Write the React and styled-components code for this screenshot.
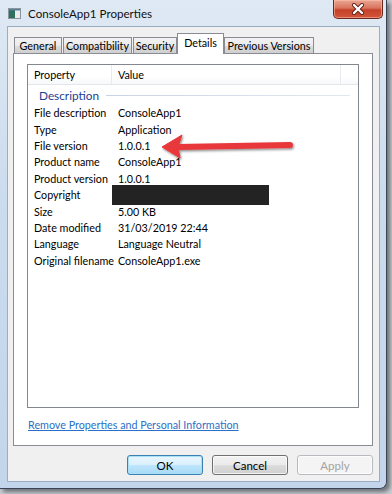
import React from "react";
import styled, { createGlobalStyle } from "styled-components";

const GlobalStyle = createGlobalStyle`
  html, body {
    margin: 0;
    padding: 0;
  }
  body {
    font-family: "Segoe UI", Lato, "Noto Sans", sans-serif;
    font-size: 10.75px;
    color: #000;
  }
`;

const Desktop = styled.div`
  width: 392px;
  height: 494px;
  background: #c9cdd2;
  overflow: hidden;
`;

const Window = styled.div`
  width: 386px;
  height: 488px;
  display: flex;
  flex-direction: column;
  background: linear-gradient(180deg, #dfe9f4 0%, #cbdcee 40%, #c2d5ea 100%);
  border-right: 1px solid #3b4552;
  border-bottom: 1px solid #3b4552;
  border-radius: 0 0 7px 0;
  box-shadow: 3px 3px 4px rgba(30, 36, 44, 0.55);
`;

const TitleBar = styled.div`
  height: 26px;
  display: flex;
  align-items: center;
  padding-left: 8px;
  position: relative;
  flex-shrink: 0;
`;

const Title = styled.span`
  margin-left: 7px;
  font-size: 11.6px;
  color: #111;
`;

const CloseButton = styled.div`
  position: absolute;
  left: 333px;
  top: 0;
  width: 48px;
  height: 18px;
  border: 1px solid #6b2a20;
  border-top: none;
  border-radius: 0 0 5px 5px;
  background: linear-gradient(180deg, #e9a895 0%, #d9735c 45%, #c5412a 55%, #d2553a 100%);
  box-shadow: inset 0 0 0 1px rgba(255, 200, 180, 0.5);
  display: flex;
  align-items: center;
  justify-content: center;
`;

const Client = styled.div`
  flex: 1;
  margin: 0 6px 6px 7px;
  background: #f0f0f0;
  border: 1px solid #9aadc2;
  padding: 6px 6px 0 5px;
  display: flex;
  flex-direction: column;
`;

const TabRow = styled.div`
  display: flex;
  align-items: flex-end;
  height: 21px;
  padding-left: 1px;
  gap: 1px;
  position: relative;
  z-index: 1;
`;

const Tab = styled.div`
  width: ${(p) => p.$w}px;
  height: ${(p) => (p.$active ? 21 : 17)}px;
  box-sizing: border-box;
  border: 1px solid #898c95;
  border-bottom: ${(p) => (p.$active ? "none" : "1px solid #898c95")};
  margin: ${(p) => (p.$active ? "0 -1px" : "0")};
  background: ${(p) =>
    p.$active
      ? "#ffffff"
      : "linear-gradient(180deg, #f2f2f2 0%, #ebebeb 50%, #dddddd 51%, #cfcfcf 100%)"};
  display: flex;
  align-items: ${(p) => (p.$active ? "flex-start" : "center")};
  padding-top: ${(p) => (p.$active ? "2px" : "0")};
  justify-content: center;
  white-space: nowrap;
`;

const Panel = styled.div`
  height: 393px;
  margin-top: -1px;
  background: #fff;
  border: 1px solid #898c95;
  box-sizing: border-box;
  display: flex;
  flex-direction: column;
  padding: 10px 13px 0 13px;
`;

const List = styled.div`
  position: relative;
  height: 344px;
  box-sizing: border-box;
  border: 1px solid #828790;
  background: #fff;
`;

const HeaderRow = styled.div`
  display: grid;
  grid-template-columns: 84px 229px 1fr;
  height: 19px;
  border-bottom: 1px solid #e3e6ea;
  background: linear-gradient(180deg, #ffffff 0%, #ffffff 60%, #f7f8fa 100%);
`;

const HeaderCell = styled.div`
  display: flex;
  align-items: center;
  padding-left: 6px;
  border-right: 1px solid ${(p) => (p.$last ? "transparent" : "#e7eaee")};
`;

const Group = styled.div`
  display: flex;
  align-items: center;
  height: 20px;
  padding: 0 8px 0 11px;
  color: #1e3d8f;
  font-size: 11.8px;
`;

const GroupLine = styled.div`
  flex: 1;
  height: 1px;
  margin-left: 7px;
  background: linear-gradient(90deg, #c8d3e3 0%, #e2e8f0 100%);
`;

const Row = styled.div`
  display: grid;
  grid-template-columns: 84px 1fr;
  height: 16.4px;
  align-items: center;
  white-space: nowrap;
`;

const Cell = styled.div`
  padding-left: 6px;
  position: relative;
  height: 16px;
  line-height: 16px;
`;

const Redaction = styled.div`
  position: absolute;
  left: 0;
  top: -2px;
  width: 157px;
  height: 20px;
  background: #232323;
`;

const Arrow = styled.svg`
  position: absolute;
  left: 130px;
  top: 66px;
  overflow: visible;
`;

const LinkRow = styled.div`
  margin-top: 10px;
  padding-left: 1px;
`;

const Link = styled.a`
  color: #2a6fc9;
  text-decoration: underline;
  cursor: pointer;
`;

const ButtonRow = styled.div`
  display: flex;
  justify-content: flex-end;
  gap: 9px;
  margin-top: 9px;
`;

const Button = styled.div`
  width: 76px;
  height: 20px;
  box-sizing: border-box;
  border-radius: 3px;
  display: flex;
  align-items: center;
  justify-content: center;
  font-size: 11.5px;
  border: 1px solid ${(p) => (p.$default ? "#3c7fb1" : p.$disabled ? "#b7bbbf" : "#707070")};
  color: ${(p) => (p.$disabled ? "#a3a3a3" : "#000")};
  background: ${(p) =>
    p.$disabled
      ? "#f4f4f4"
      : p.$default
      ? "linear-gradient(180deg, #eaf6fd 0%, #d9f0fc 50%, #bee6fd 51%, #a7d9f5 100%)"
      : "linear-gradient(180deg, #f2f2f2 0%, #ebebeb 50%, #dddddd 51%, #cfcfcf 100%)"};
  box-shadow: ${(p) => (p.$default ? "inset 0 0 0 1px #a9e0f8" : "inset 0 0 0 1px rgba(255,255,255,0.7)")};
`;

const tabs = [
  { label: "General", w: 48 },
  { label: "Compatibility", w: 69 },
  { label: "Security", w: 44 },
  { label: "Details", w: 47, active: true },
  { label: "Previous Versions", w: 90 },
];

const rows = [
  ["File description", "ConsoleApp1"],
  ["Type", "Application"],
  ["File version", "1.0.0.1"],
  ["Product name", "ConsoleApp1"],
  ["Product version", "1.0.0.1"],
  ["Copyright", null],
  ["Size", "5.00 KB"],
  ["Date modified", "31/03/2019 22:44"],
  ["Language", "Language Neutral"],
  ["Original filename", "ConsoleApp1.exe"],
];

const AppIcon = () => (
  <svg width="13" height="11" viewBox="0 0 13 11">
    <rect x="0.5" y="0.5" width="12" height="10" fill="#e8ecef" stroke="#8a949c" />
    <rect x="1" y="1" width="6" height="9" fill="#2f6f5e" />
    <rect x="1" y="1" width="11" height="1.5" fill="#5a7f9a" />
  </svg>
);

const CloseGlyph = () => (
  <svg width="14" height="12" viewBox="0 0 14 12">
    <path d="M3 2 L11 10 M11 2 L3 10" stroke="#5a1c12" strokeWidth="4" strokeLinecap="round" />
    <path d="M3 2 L11 10 M11 2 L3 10" stroke="#ffffff" strokeWidth="2.4" strokeLinecap="round" />
  </svg>
);

const RedArrow = () => (
  <Arrow width="140" height="32" viewBox="0 0 140 32">
    <defs>
      <filter id="sh" x="-10%" y="-40%" width="120%" height="180%">
        <feDropShadow dx="1" dy="1.5" stdDeviation="1.2" floodColor="#000" floodOpacity="0.45" />
      </filter>
    </defs>
    <g filter="url(#sh)" fill="#e8383a" stroke="#e8383a">
      <line x1="20" y1="16" x2="132" y2="14" strokeWidth="6" strokeLinecap="round" />
      <polygon points="4,16 24,4 20,16 22,27" strokeWidth="1" strokeLinejoin="round" />
    </g>
  </Arrow>
);

export default function App() {
  return (
    <Desktop>
      <GlobalStyle />
      <Window>
        <TitleBar>
          <AppIcon />
          <Title>ConsoleApp1 Properties</Title>
          <CloseButton>
            <CloseGlyph />
          </CloseButton>
        </TitleBar>
        <Client>
          <TabRow>
            {tabs.map((t) => (
              <Tab key={t.label} $w={t.w} $active={t.active}>
                {t.label}
              </Tab>
            ))}
          </TabRow>
          <Panel>
            <List>
              <HeaderRow>
                <HeaderCell>Property</HeaderCell>
                <HeaderCell>Value</HeaderCell>
                <HeaderCell $last />
              </HeaderRow>
              <Group>
                Description
                <GroupLine />
              </Group>
              {rows.map(([name, value]) => (
                <Row key={name}>
                  <Cell>{name}</Cell>
                  <Cell>{value === null ? <Redaction /> : value}</Cell>
                </Row>
              ))}
              <RedArrow />
            </List>
            <LinkRow>
              <Link>Remove Properties and Personal Information</Link>
            </LinkRow>
          </Panel>
          <ButtonRow>
            <Button $default>OK</Button>
            <Button>Cancel</Button>
            <Button $disabled>Apply</Button>
          </ButtonRow>
        </Client>
      </Window>
    </Desktop>
  );
}
